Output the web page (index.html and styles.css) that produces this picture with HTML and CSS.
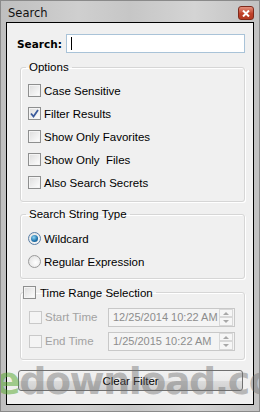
FILE: index.html
```html
<!DOCTYPE html>
<html>
<head>
<meta charset="utf-8">
<link rel="stylesheet" href="styles.css">
</head>
<body>
<div class="window">
  <div class="titlebar">
    <span class="title">Search</span>
    <span class="close"><svg width="8" height="7" viewBox="0 0 8 7"><path d="M1 0.5 L7 6.5 M7 0.5 L1 6.5" stroke="#fff" stroke-width="2"/></svg></span>
  </div>
  <div class="client">
    <div class="search-row">
      <span class="search-label">Search:</span>
      <div class="input"><span class="caret"></span></div>
    </div>

    <fieldset class="group g1">
      <legend>Options</legend>
      <div class="row"><span class="cb"></span><span>Case Sensitive</span></div>
      <div class="row"><span class="cb checked"><svg width="9" height="9" viewBox="0 0 9 9"><path d="M1 4.5 L3.5 7.5 L8 1" fill="none" stroke="#3a5a9c" stroke-width="1.8"/></svg></span><span>Filter Results</span></div>
      <div class="row"><span class="cb"></span><span>Show Only Favorites</span></div>
      <div class="row"><span class="cb"></span><span>Show Only&nbsp; Files</span></div>
      <div class="row"><span class="cb"></span><span>Also Search Secrets</span></div>
    </fieldset>

    <fieldset class="group g2">
      <legend>Search String Type</legend>
      <div class="row"><span class="rb on"><span class="dot"></span></span><span>Wildcard</span></div>
      <div class="row"><span class="rb"></span><span>Regular Expression</span></div>
    </fieldset>

    <fieldset class="group g3">
      <legend><span class="cb"></span><span>Time Range Selection</span></legend>
      <div class="trow"><span class="cb dis"></span><span class="tlabel">Start Time</span><div class="date"><span class="dtext">12/25/2014 10:22 AM</span><span class="spin"><span class="up"></span><span class="down"></span></span></div></div>
      <div class="trow"><span class="cb dis"></span><span class="tlabel">End Time</span><div class="date"><span class="dtext">1/25/2015 10:22 AM</span><span class="spin"><span class="up"></span><span class="down"></span></span></div></div>
    </fieldset>

    <div class="button">Clear Filter</div>
  </div>
  <div class="watermark"><span class="we">e</span>download.com</div>
</div>
</body>
</html>
```
FILE: styles.css
```css
* { box-sizing: border-box; }
html, body { margin: 0; padding: 0; }
body { width: 260px; height: 412px; overflow: hidden; font-family: "Liberation Sans", Arial, sans-serif; font-size: 11.5px; color: #000; }

.window {
  position: relative;
  width: 260px; height: 412px;
  background: linear-gradient(90deg, #bfbfbf 0%, #cfcfcf 30%, #c6c6c6 50%, #d4d4d4 75%, #c2c2c2 100%);
  border: 1px solid #8a8a8a;
  padding: 0 5px 6px 5px;
  display: flex; flex-direction: column;
  overflow: hidden;
}
.titlebar {
  height: 21px;
  display: flex; align-items: center; justify-content: space-between;
  padding: 0 0 0 2px;
}
.title { font-family: "DejaVu Sans", sans-serif; font-size: 11.5px; color: #111; margin-top: 2px; }
.close {
  width: 16px; height: 14px; margin-top: 3px;
  background: linear-gradient(#e4917e, #c0412a 55%, #b23a22);
  border: 1px solid #7e2a1c; border-radius: 3px;
  display: flex; align-items: center; justify-content: center;
}
.client {
  flex: 1;
  background: #f0f0f0;
  border: 1px solid #000;
  padding: 11px 8px 0 13px;
  display: flex; flex-direction: column;
}
.search-row { display: flex; align-items: center; margin-left: -3px; height: 19px; }
.search-label { width: 49px; font-family: "DejaVu Sans", sans-serif; font-weight: bold; font-size: 10.5px; }
.input {
  flex: 1; height: 19px; background: #fff;
  border: 1px solid #a9c3d8;
  display: flex; align-items: center; padding-left: 4px;
}
.caret { width: 1px; height: 13px; background: #000; }

.group {
  margin: 0; border: 1px solid #d6d6d6; border-radius: 3px;
  box-shadow: inset 1px 1px 0 #fff, 1px 1px 0 #fff;
  padding: 0 6px 0 7px;
}
.group legend { padding: 0 3px; margin-left: -2px; line-height: 14px; height: 14px; }
.g1 { margin-top: 7px; padding-top: 5px; padding-bottom: 7px; }
.g2 { margin-top: 5px; padding-top: 6px; padding-bottom: 5px; }
.g3 { margin-top: 6px; padding-top: 5px; padding-bottom: 6px; }
.g3 legend { display: flex; align-items: center; gap: 4px; margin-left: -5px; height: 15px; padding: 0 3px 0 0; }

.row { height: 23px; display: flex; align-items: center; gap: 3px; }

.cb {
  width: 13px; height: 13px; flex: none;
  border: 1px solid #8e8f8f;
  background: linear-gradient(135deg, #dcdcdc, #f4f4f4 70%, #fff);
  box-shadow: inset 0 0 0 1px #f4f4f4;
  display: flex; align-items: center; justify-content: center;
}
.cb.dis { border-color: #c9c9c9; background: #f4f4f4; box-shadow: none; }
.rb {
  width: 13px; height: 13px; flex: none; border-radius: 50%;
  border: 1px solid #9a9a9a;
  background: radial-gradient(circle at 60% 60%, #fff, #dcdcdc);
  display: flex; align-items: center; justify-content: center;
}
.rb.on { border-color: #5a7fa6; }
.dot { width: 7px; height: 7px; border-radius: 50%; background: radial-gradient(circle at 40% 35%, #8fd6f5, #1b6fa8 60%, #114f80); }

.trow { height: 24px; display: flex; align-items: center; }
.trow .cb { margin-left: 1px; }
.tlabel { color: #a2a2a2; margin-left: 3px; width: 63px; white-space: nowrap; }
.date {
  width: 127px; height: 19px; flex: none;
  border: 1px solid #c8c8c8; background: #f4f4f4;
  display: flex; align-items: center; justify-content: space-between;
  padding-left: 4px; color: #8d8d8d; white-space: nowrap;
}
.dtext { font-size: 11px; }
.spin { width: 14px; height: 17px; display: flex; flex-direction: column; margin-right: 1px; }
.spin .up, .spin .down { flex: 1; border: 1px solid #d8d8d8; background: #f6f6f6; position: relative; }
.spin .up::after { content: ""; position: absolute; left: 3px; top: 2px; border: 3px solid transparent; border-bottom: 3px solid #a8a8a8; border-top: 0; }
.spin .down::after { content: ""; position: absolute; left: 3px; top: 2px; border: 3px solid transparent; border-top: 3px solid #a8a8a8; border-bottom: 0; }

.button {
  margin-top: 10px; margin-left: -2px; margin-right: 2px;
  height: 21px; border: 1px solid #707070; border-radius: 3px;
  background: linear-gradient(#f2f2f2, #ebebeb 50%, #dddddd 51%, #cfcfcf);
  display: flex; align-items: center; justify-content: center;
}

.watermark {
  position: absolute; left: -6px; top: 358px;
  font-family: "DejaVu Sans", sans-serif; font-weight: bold; font-size: 38px;
  letter-spacing: -1.5px;
  color: rgba(110,110,110,0.45);
  pointer-events: none; white-space: nowrap;
}
.we { color: rgba(90,170,50,0.55); }
```
